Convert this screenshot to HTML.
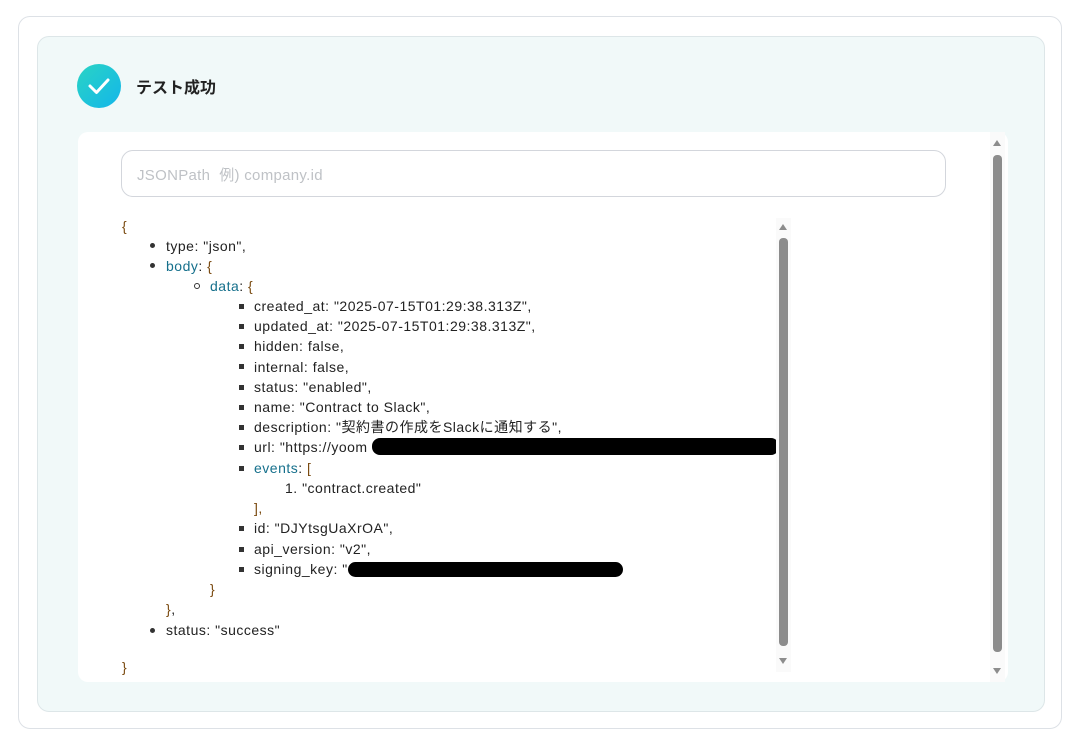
<!DOCTYPE html>
<html><head><meta charset="utf-8"><style>
body{margin:0;width:1082px;height:743px;background:#fff;font-family:"Liberation Sans","Noto Sans CJK JP",sans-serif;position:relative;overflow:hidden}
.outer{position:absolute;left:18px;top:16px;width:1044px;height:713px;border:1px solid #dde1e6;border-radius:12px;box-sizing:border-box}
.panel{position:absolute;left:37px;top:36px;width:1008px;height:676px;background:#f1f9f9;border:1px solid #dde6e8;border-radius:12px;box-sizing:border-box}
.check{position:absolute;left:77px;top:64px;width:44px;height:44px;border-radius:50%;background:linear-gradient(135deg,#2ad4c4,#13b6ea)}
.title{position:absolute;left:136px;top:74px;font-size:16px;font-weight:bold;color:#222}
.box{position:absolute;left:78px;top:132px;width:930px;height:550px;background:#fff;border-radius:10px}
.input{position:absolute;left:121px;top:150px;width:825px;height:47px;border:1px solid #d3d6dc;border-radius:12px;box-sizing:border-box;color:#bfc2c6;font-size:15px;padding:13px 15px;letter-spacing:0.3px}
.l{position:absolute;font-size:14px;color:#222;white-space:nowrap;line-height:16px;letter-spacing:0.5px}
.k{color:#16708c}.b{color:#7a4a10}
.d{position:absolute;width:5px;height:5px;background:#333;border-radius:50%}
.c{position:absolute;width:4px;height:4px;border:1px solid #333;border-radius:50%}
.s{position:absolute;width:5px;height:5px;background:#333}
.red{position:absolute;background:#000;border-radius:8px}
.sb{position:absolute;background:#8c8c8c;border-radius:4px}
.tri{position:absolute;width:0;height:0;border-left:4px solid transparent;border-right:4px solid transparent}
</style></head><body>
<div class="outer"></div>
<div class="panel"></div>
<div class="check"><svg width="44" height="44"><path d="M13 22 L19.5 28.5 L31 16" stroke="#fff" stroke-width="3" fill="none" stroke-linecap="round" stroke-linejoin="round"/></svg></div>
<div class="title">テスト成功</div>
<div class="box"></div>
<div class="input">JSONPath&nbsp; 例) company.id</div>

<div class="l b" style="left:122px;top:218px">{</div>
<div class="d" style="left:150px;top:243px"></div><div class="l" style="left:166px;top:238px">type: "json",</div>
<div class="d" style="left:150px;top:263px"></div><div class="l" style="left:166px;top:258px"><span class="k">body</span>: <span class="b">{</span></div>
<div class="c" style="left:194px;top:283px"></div><div class="l" style="left:210px;top:278px"><span class="k">data</span>: <span class="b">{</span></div>
<div class="s" style="left:239px;top:304px"></div><div class="l" style="left:254px;top:298px">created_at: "2025-07-15T01:29:38.313Z",</div>
<div class="s" style="left:239px;top:324px"></div><div class="l" style="left:254px;top:318px">updated_at: "2025-07-15T01:29:38.313Z",</div>
<div class="s" style="left:239px;top:344px"></div><div class="l" style="left:254px;top:338px">hidden: false,</div>
<div class="s" style="left:239px;top:364px"></div><div class="l" style="left:254px;top:359px">internal: false,</div>
<div class="s" style="left:239px;top:385px"></div><div class="l" style="left:254px;top:379px">status: "enabled",</div>
<div class="s" style="left:239px;top:405px"></div><div class="l" style="left:254px;top:399px">name: "Contract to Slack",</div>
<div class="s" style="left:239px;top:425px"></div><div class="l" style="left:254px;top:419px">description: "契約書の作成をSlackに通知する",</div>
<div class="s" style="left:239px;top:445px"></div><div class="l" style="left:254px;top:439px">url: "https://yoom</div>
<div class="red" style="left:372px;top:438px;width:407px;height:17px"></div>
<div class="s" style="left:239px;top:466px"></div><div class="l" style="left:254px;top:460px"><span class="k">events</span>: <span class="b">[</span></div>
<div class="l" style="left:285px;top:480px">1. "contract.created"</div>
<div class="l b" style="left:254px;top:500px">],</div>
<div class="s" style="left:239px;top:526px"></div><div class="l" style="left:254px;top:520px">id: "DJYtsgUaXrOA",</div>
<div class="s" style="left:239px;top:547px"></div><div class="l" style="left:254px;top:541px">api_version: "v2",</div>
<div class="s" style="left:239px;top:567px"></div><div class="l" style="left:254px;top:561px">signing_key: "</div>
<div class="red" style="left:348px;top:562px;width:275px;height:15px"></div>
<div class="l b" style="left:210px;top:581px">}</div>
<div class="l" style="left:166px;top:601px"><span class="b">}</span>,</div>
<div class="d" style="left:150px;top:628px"></div><div class="l" style="left:166px;top:622px">status: "success"</div>
<div class="l b" style="left:122px;top:659px">}</div>

<div style="position:absolute;left:776px;top:218px;width:15px;height:454px;background:#fafafa"></div>
<div class="tri" style="left:779px;top:224px;border-bottom:6px solid #8c8c8c"></div>
<div class="sb" style="left:779px;top:238px;width:9px;height:408px"></div>
<div class="tri" style="left:779px;top:658px;border-top:6px solid #8c8c8c"></div>

<div style="position:absolute;left:990px;top:132px;width:15px;height:550px;background:#fafafa"></div>
<div class="tri" style="left:993px;top:140px;border-bottom:6px solid #8c8c8c"></div>
<div class="sb" style="left:993px;top:155px;width:9px;height:497px"></div>
<div class="tri" style="left:993px;top:668px;border-top:6px solid #8c8c8c"></div>
</body></html>
